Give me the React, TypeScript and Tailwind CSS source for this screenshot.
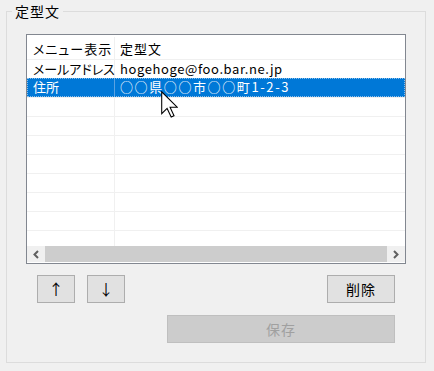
import React from 'react';

const rows = [
  { menu: 'メールアドレス', text: 'hogehoge@foo.bar.ne.jp', textCls: 'tracking-[0.6px]' },
  { menu: '住所', text: '○○県○○市○○町1-2-3', textCls: 'tracking-[1.6px]', selected: true },
  { menu: '', text: '' },
  { menu: '', text: '' },
  { menu: '', text: '' },
  { menu: '', text: '' },
  { menu: '', text: '' },
  { menu: '', text: '' },
  { menu: '', text: '' },
  { menu: '', text: '' },
];

function Chevron({ right }: { right?: boolean }) {
  return (
    <svg width="8" height="9" viewBox="0 0 8 9">
      <polyline
        points={right ? '2,1 5.5,4.5 2,8' : '6,1 2.5,4.5 6,8'}
        fill="none"
        stroke="#606060"
        strokeWidth="2"
      />
    </svg>
  );
}

function Cursor() {
  return (
    <svg width="17" height="27" viewBox="0 0 12 19" className="absolute left-[161px] top-[91px]">
      <polygon
        points="0.5,0.5 0.5,16 4.3,12.3 7.2,18.3 9.2,17.4 6.4,11.4 11.4,11.4"
        fill="#fff"
        stroke="#000"
        strokeWidth="0.75"
      />
    </svg>
  );
}

export default function App() {
  return (
    <div className="relative w-[434px] h-[371px] bg-[#f0f0f0] pt-[11px] pl-[6px] text-black font-['Noto_Sans_CJK_JP','Noto_Sans',sans-serif] [font-feature-settings:'palt']">
      <div className="relative w-[420px] h-[352px] border border-[#dcdcdc] pl-[19px] pt-[22px]">
        <span className="absolute left-[5px] -top-[10px] px-[3px] bg-[#f0f0f0] text-[14px] tracking-[1px] leading-[18px]">定型文</span>

        {/* list view */}
        <div className="w-[380px] h-[230px] border border-[#828790] bg-white flex flex-col">
          <div className="h-[211px] overflow-hidden">
            <div className="h-[24px] flex text-[13px] leading-[24px] pt-[2px]">
              <div className="w-[88px] border-r border-[#f0f0f0] pl-[6px] tracking-[1px] whitespace-nowrap">メニュー表示</div>
              <div className="flex-1 pl-[5px] tracking-[1px]">定型文</div>
            </div>
            {rows.map((r, i) => (
              <div
                key={i}
                className={
                  r.selected
                    ? 'h-[19px] flex text-[13px] leading-[18px] bg-[#0078d7] text-white outline-1 outline-dotted outline-[#8cbfea] -outline-offset-1'
                    : 'h-[19px] flex text-[13px] leading-[18px] border-t border-[#f0f0f0]'
                }
              >
                <div
                  className={
                    r.selected
                      ? 'w-[88px] border-r border-[#5aa2e2] pl-[6px] whitespace-nowrap'
                      : 'w-[88px] border-r border-[#f0f0f0] pl-[6px] whitespace-nowrap'
                  }
                >
                  {r.menu}
                </div>
                <div className={'flex-1 pl-[5px] whitespace-nowrap ' + (r.textCls ?? '')}>{r.text}</div>
              </div>
            ))}
          </div>
          <div className="h-[16px] flex bg-[#f0f0f0]">
            <div className="w-[18px] flex items-center justify-center">
              <Chevron />
            </div>
            <div className="flex-1 bg-[#cdcdcd]" />
            <div className="w-[18px] flex items-center justify-center">
              <Chevron right />
            </div>
          </div>
        </div>

        {/* buttons */}
        <div className="w-[380px] mt-[11px] flex text-[14px]">
          <button className="ml-[11px] w-[38px] h-[28px] border border-[#adadad] bg-[#e1e1e1] flex items-center justify-center text-[15px]">↑</button>
          <button className="ml-[12px] w-[38px] h-[28px] border border-[#adadad] bg-[#e1e1e1] flex items-center justify-center text-[15px]">↓</button>
          <button className="ml-auto mr-[11px] w-[68px] h-[28px] border border-[#adadad] bg-[#e1e1e1] flex items-center justify-center tracking-[1px]">削除</button>
        </div>
        <button
          disabled
          className="mt-[12px] ml-[141px] w-[228px] h-[28px] border border-[#bfbfbf] bg-[#cccccc] text-[#a0a0a0] text-[14px] tracking-[1px] flex items-center justify-center"
        >
          保存
        </button>
      </div>
      <Cursor />
    </div>
  );
}
